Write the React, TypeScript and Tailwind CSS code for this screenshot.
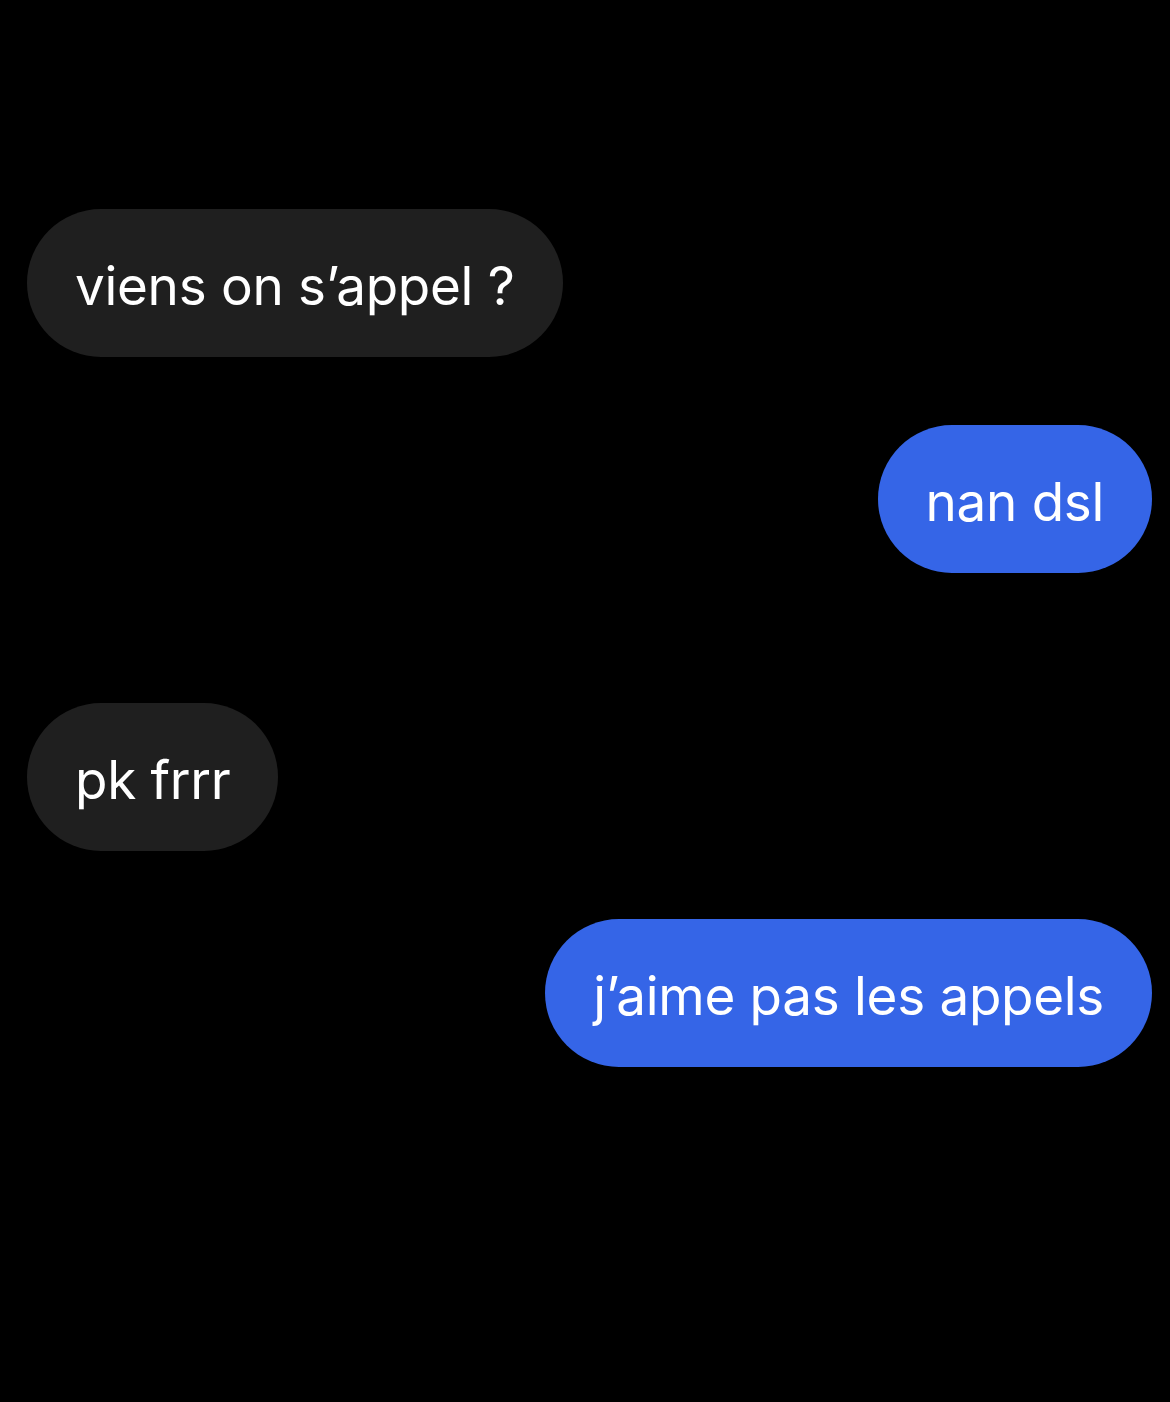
import React from "react";

function Bubble({ text, mine }: { text: string; mine?: boolean }) {
  return (
    <div className={mine ? "flex justify-end" : "flex justify-start"}>
      <div
        className={
          (mine ? "bg-[#3565e7]" : "bg-[#1f1f1f]") +
          " h-[148px] rounded-full px-[48px] flex items-center text-white text-[53px] leading-none tracking-[-0.3px] whitespace-nowrap"
        }
        style={{ fontFamily: "Inter, 'Noto Sans', sans-serif" }}
      >
        <span className="pt-[6px]">{text}</span>
      </div>
    </div>
  );
}

export default function App() {
  return (
    <div className="w-[1170px] h-[1402px] bg-black pl-[27px] pr-[18px] pt-[209px] overflow-hidden">
      <Bubble text="viens on s’appel ?" />
      <div className="mt-[68px]">
        <Bubble text="nan dsl" mine />
      </div>
      <div className="mt-[130px]">
        <Bubble text="pk frrr" />
      </div>
      <div className="mt-[68px]">
        <Bubble text="j’aime pas les appels" mine />
      </div>
    </div>
  );
}
